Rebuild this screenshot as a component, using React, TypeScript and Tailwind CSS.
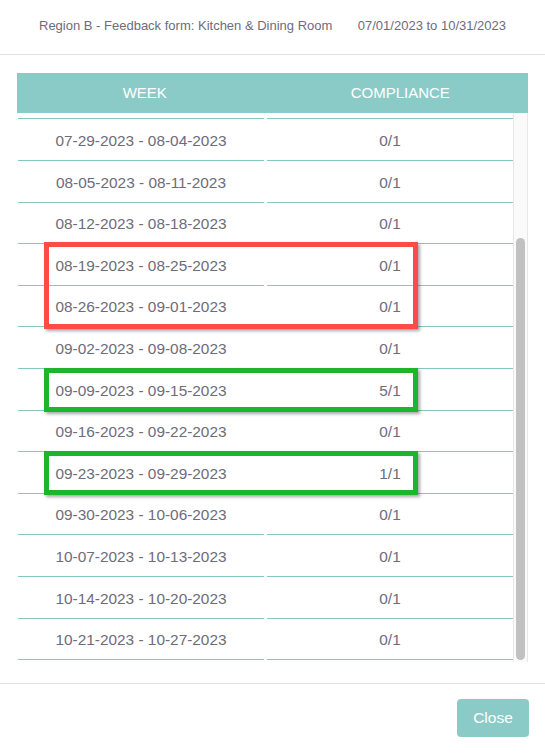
import { useLayoutEffect, useRef } from "react";

const weeks = [
  ["07-01-2023 - 07-07-2023", "0/1"],
  ["07-08-2023 - 07-14-2023", "0/1"],
  ["07-15-2023 - 07-21-2023", "0/1"],
  ["07-22-2023 - 07-28-2023", "0/1"],
  ["07-29-2023 - 08-04-2023", "0/1"],
  ["08-05-2023 - 08-11-2023", "0/1"],
  ["08-12-2023 - 08-18-2023", "0/1"],
  ["08-19-2023 - 08-25-2023", "0/1"],
  ["08-26-2023 - 09-01-2023", "0/1"],
  ["09-02-2023 - 09-08-2023", "0/1"],
  ["09-09-2023 - 09-15-2023", "5/1"],
  ["09-16-2023 - 09-22-2023", "0/1"],
  ["09-23-2023 - 09-29-2023", "1/1"],
  ["09-30-2023 - 10-06-2023", "0/1"],
  ["10-07-2023 - 10-13-2023", "0/1"],
  ["10-14-2023 - 10-20-2023", "0/1"],
  ["10-21-2023 - 10-27-2023", "0/1"],
];

export default function App() {
  const scrollRef = useRef<HTMLDivElement>(null);

  useLayoutEffect(() => {
    // modal is shown scrolled all the way down
    if (scrollRef.current) scrollRef.current.scrollTop = 10000;
  }, []);

  return (
    <div className="relative flex h-[755px] w-[545px] flex-col bg-white font-['Liberation_Sans',Arial,sans-serif] text-[#6d6c7b]">
      {/* Modal header */}
      <div className="flex h-[55px] items-center justify-between border-b border-[#dee2e6] px-[39px] pb-[3px] text-[13px]">
        <span>Region B - Feedback form: Kitchen &amp; Dining Room</span>
        <span>07/01/2023 to 10/31/2023</span>
      </div>

      {/* Body */}
      <div className="px-[17px] pt-[18px] pb-[21px]">
        <div className="grid h-[40px] grid-cols-2 items-center bg-[#8bcbc7] text-[15px] text-white">
          <div className="text-center">WEEK</div>
          <div className="text-center">COMPLIANCE</div>
        </div>
        <div className="flex h-[549px]">
          <div ref={scrollRef} className="flex-1 overflow-hidden">
            <div className="pb-[2px] pl-px">
              {weeks.map(([week, score]) => (
                <div key={week} className="grid h-[41.6px] grid-cols-2 gap-x-[3px] text-[15.4px]">
                  <div className="flex items-center justify-center border-b border-[#86c7c2] pt-[2px]">{week}</div>
                  <div className="flex items-center justify-center border-b border-[#86c7c2] pt-[2px]">{score}</div>
                </div>
              ))}
            </div>
          </div>
          {/* scrollbar */}
          <div className="flex w-[15px] flex-col border-x border-[#e8e8e8] bg-[#fafafa] px-[2px] pt-[125px] pb-[2px]">
            <div className="flex-1 rounded-full bg-[#c1c1c1]" />
          </div>
        </div>
      </div>

      {/* Footer */}
      <div className="flex justify-end border-t border-[#dee2e6] px-[16px] pt-[15px]">
        <button className="h-[38px] w-[72px] rounded-[4px] bg-[#8bcbc7] text-[15.5px] text-white">Close</button>
      </div>

      {/* Annotation boxes */}
      <div className="pointer-events-none absolute left-[44px] top-[242px] h-[87px] w-[374px] border-[5px] border-[#fd4c47] shadow-[2px_2px_3px_rgba(0,0,0,0.35)]" />
      <div className="pointer-events-none absolute left-[44px] top-[368px] h-[44px] w-[374px] border-[5px] border-[#1cb52b] shadow-[2px_2px_3px_rgba(0,0,0,0.35)]" />
      <div className="pointer-events-none absolute left-[44px] top-[451px] h-[44px] w-[374px] border-[5px] border-[#1cb52b] shadow-[2px_2px_3px_rgba(0,0,0,0.35)]" />
    </div>
  );
}
